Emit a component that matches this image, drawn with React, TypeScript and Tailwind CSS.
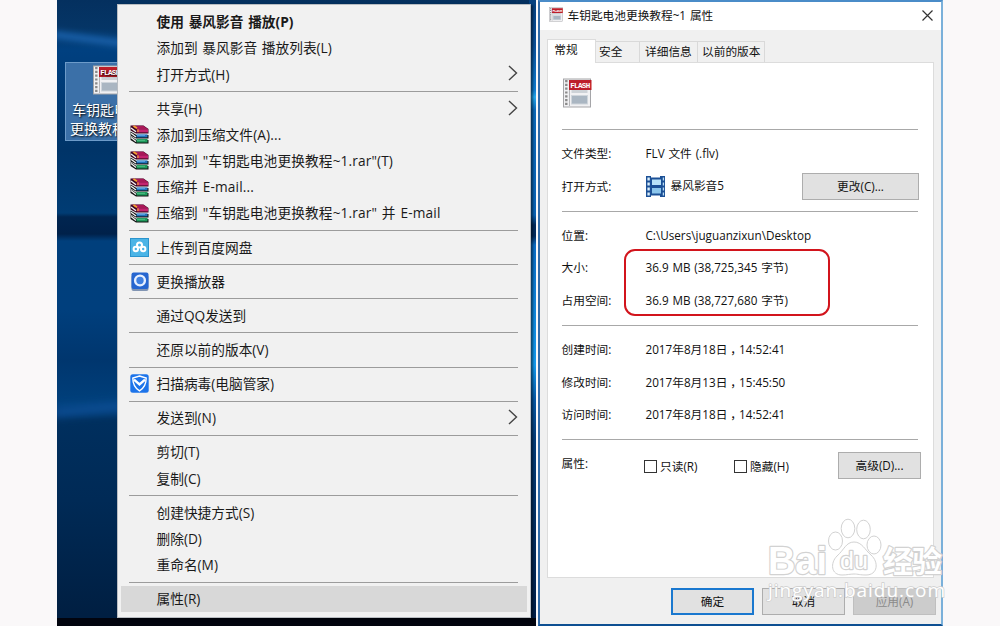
import { ReactNode } from 'react';
import clsx from 'clsx';

type MenuEntry = {
  label: string;
  icon?: 'rar' | 'pan' | 'player' | 'shield';
  submenu?: boolean;
  bold?: boolean;
  selected?: boolean;
};

const menuGroups: MenuEntry[][] = [
  [
    { label: '使用 暴风影音 播放(P)', bold: true },
    { label: '添加到 暴风影音 播放列表(L)' },
    { label: '打开方式(H)', submenu: true },
  ],
  [
    { label: '共享(H)', submenu: true },
    { label: '添加到压缩文件(A)...', icon: 'rar' },
    { label: '添加到 "车钥匙电池更换教程~1.rar"(T)', icon: 'rar' },
    { label: '压缩并 E-mail...', icon: 'rar' },
    { label: '压缩到 "车钥匙电池更换教程~1.rar" 并 E-mail', icon: 'rar' },
  ],
  [{ label: '上传到百度网盘', icon: 'pan' }],
  [{ label: '更换播放器', icon: 'player' }],
  [{ label: '通过QQ发送到' }],
  [{ label: '还原以前的版本(V)' }],
  [{ label: '扫描病毒(电脑管家)', icon: 'shield' }],
  [{ label: '发送到(N)', submenu: true }],
  [{ label: '剪切(T)' }, { label: '复制(C)' }],
  [{ label: '创建快捷方式(S)' }, { label: '删除(D)' }, { label: '重命名(M)' }],
  [{ label: '属性(R)', selected: true }],
];

const RarIcon = () => (
  <svg viewBox="0 0 19 19" className="w-[19px] h-[19px]">
    {/* bottom book first so that each one overlaps the one below */}
    <path d="M0.5 11L6.5 15H18.5V18.5H6L0.5 15Z" fill="#111" />
    <path d="M1 12.5L6 16.5" stroke="#f4f4f4" strokeWidth="1.3" />
    <path d="M6.5 14H17.5V17.5H6.5Z" fill="#1f9a5c" />
    <path d="M7 15.3H15" stroke="#5cc890" strokeWidth="0.8" />
    <path d="M0.5 6.5L6.5 10H18.5V13.5H6L0.5 10.5Z" fill="#111" />
    <path d="M1 8.3L6 12" stroke="#f4f4f4" strokeWidth="1.3" />
    <path d="M6.5 9.4H17.5V12.4H6.5Z" fill="#2273bd" />
    <path d="M7 10.4H15" stroke="#6fb2e8" strokeWidth="0.8" />
    <path d="M0.5 0.5H13.5L18.5 4V8.5H6L0.5 5.5Z" fill="#3a0620" />
    <path d="M1.5 0.8H13.3L17.8 4H6.8Z" fill="#a81858" />
    <path d="M6.8 4.2H18V7.4H6.8Z" fill="#c4246f" />
    <path d="M1 3L6 6.8" stroke="#f4f4f4" strokeWidth="1.3" />
    <path d="M3.5 1L7 3.2" stroke="#f2a22c" strokeWidth="1.8" />
    <path d="M8 4.2V7" stroke="#f2a22c" strokeWidth="1.2" />
  </svg>
);

const PanIcon = () => (
  <svg viewBox="0 0 19 19" className="w-[19px] h-[19px]">
    <rect x="0.5" y="0.5" width="18" height="18" fill="#4bb4e6" stroke="#2a94cd" />
    <g fill="none" stroke="#fff" strokeWidth="2">
      <circle cx="9.5" cy="6.9" r="2.5" />
      <circle cx="5.8" cy="11" r="2.2" />
      <circle cx="13.2" cy="11" r="2.2" />
    </g>
  </svg>
);

const PlayerIcon = () => (
  <svg viewBox="0 0 19 19" className="w-[19px] h-[19px]">
    <rect x="1.5" y="3" width="17" height="16" rx="2" fill="#8295b3" />
    <rect x="1.5" y="0.5" width="17" height="16.5" rx="2" fill="#2565d0" />
    <circle cx="10" cy="8.5" r="4.9" fill="#3f7fe0" stroke="#e6efff" strokeWidth="2.4" />
  </svg>
);

const ShieldIcon = () => (
  <svg viewBox="0 0 19 19" className="w-[19px] h-[19px]">
    <rect x="0.3" y="0.3" width="18.4" height="18.4" rx="2.5" fill="#1d74ea" />
    <path d="M9.5 2L16.2 4.1C16.2 10.5 14.2 14.2 9.5 16.9C4.8 14.2 2.8 10.5 2.8 4.1Z" fill="none" stroke="#fff" strokeWidth="1.4" />
    <path d="M4 5.6L9.5 10.4L15 5.6" fill="none" stroke="#fff" strokeWidth="2.4" />
  </svg>
);

const icons = {
  rar: <RarIcon />,
  pan: <PanIcon />,
  player: <PlayerIcon />,
  shield: <ShieldIcon />,
};

const FlashIcon = ({ className }: { className: string }) => (
  <svg viewBox="0 0 29 30" className={className}>
    <rect x="0.5" y="1" width="27" height="28" fill="#f1f1f3" stroke="#a5a5a8" />
    <rect x="6" y="2" width="1" height="26" fill="#b5b5b8" />
    <path d="M3.3 2V28" stroke="#8a8a8a" strokeWidth="2.4" strokeDasharray="2.2 1.6" />
    <rect x="8.5" y="12" width="16" height="3" fill="#cdd2d7" />
    <rect x="8.5" y="17.5" width="16" height="8.5" fill="#aab6c2" stroke="#cfd5db" />
    <rect x="6" y="2" width="22.5" height="10" fill="#bd1f2a" />
    <text x="17.2" y="9.7" fontSize="7.6" fontWeight="700" fill="#fff" textAnchor="middle" textLength="20" fontFamily="Liberation Mono, monospace">
      FLASH
    </text>
  </svg>
);

const FilmIcon = () => (
  <svg viewBox="0 0 19 21" className="w-[19px] h-[21px]">
    <path d="M0 0H5V1.5H14V0H19V21H14V19.5H5V21H0Z" fill="#1c5096" />
    <rect x="6" y="3.5" width="9" height="5.5" fill="#b9e2f8" />
    <rect x="6" y="12" width="9" height="5.5" fill="#8cc6ec" />
    <path d="M2.6 1.5V21" stroke="#d9eefb" strokeWidth="2.4" strokeDasharray="3 2" />
    <path d="M17.4 1.5V21" stroke="#b9dcf4" strokeWidth="1.3" strokeDasharray="3 2" />
  </svg>
);

const MenuItem = ({ item }: { item: MenuEntry }) => (
  <div className={clsx('flex items-center h-[26.2px] mx-[3px] px-[9px]', item.selected && 'bg-[#d8d8d8]')}>
    <div className="w-[27px] shrink-0 -ml-[0.5px]">{item.icon && icons[item.icon]}</div>
    <span className={clsx('grow whitespace-pre leading-none', item.bold && 'font-bold', item.icon === 'rar' && 'tracking-[0.12px]')}>
      {item.label}
    </span>
    {item.submenu && (
      <svg viewBox="0 0 10 16" className="w-[10px] h-[16px] -mt-[2px]">
        <path d="M1 1L8.5 8L1 15" fill="none" stroke="#444" strokeWidth="1.4" />
      </svg>
    )}
  </div>
);

const ContextMenu = () => (
  <div className="absolute left-[60px] top-[4px] w-[414px] h-[614px] pt-[4px] bg-[#f1f1f1] border border-[#b9bdc2] shadow-[2px_1px_2px_rgba(0,0,0,0.5)] text-[13.7px] [word-spacing:1.2px]">
    {menuGroups.map((group, i) => (
      <div key={i}>
        {i > 0 && (
          <div className="h-[7.95px] pt-[3.6px] ml-[11px] mr-[12px]">
            <div className="border-t border-[#9c9c9c]" />
          </div>
        )}
        {group.map((item) => (
          <MenuItem key={item.label} item={item} />
        ))}
      </div>
    ))}
  </div>
);

const Desktop = () => (
  <div className="relative w-[479px] h-full shrink-0 overflow-hidden bg-[linear-gradient(180deg,#04305f_0px,#053566_28px,#004080_50px,#003468_150px,#003c74_213px,#002550_217px,#00214a_234px,#003f7c_241px,#003f7d_310px,#00366e_360px,#00407c_405px,#002f5e_420px,#002a56_500px,#001f42_614px)]">
    {/* light beams */}
    <div className="absolute -left-[4px] top-[36px] w-[80px] h-[7px] rotate-[7deg] bg-[#1a62ac] blur-[3px]" />
    <div className="absolute -left-[4px] top-[404px] w-[80px] h-[10px] rotate-[-5deg] bg-[#0c4c92] blur-[4px]" />
    <div className="absolute right-0 top-0 w-[7px] h-full bg-[linear-gradient(180deg,#04407e_0px,#0a4f98_45px,#0f7cd0_90px,#25a9ee_97px,#0c68b8_110px,#0a62b4_215px,#032a5c_225px,#032a5c_236px,#0b6cc4_245px,#1499ec_365px,#0658a5_400px,#043c78_440px,#01204a_610px)]" />
    <div className="absolute left-[8px] top-[62px] w-[90px] h-[79px] border border-[#6d9bc9] bg-[#3b70a8] text-[14px] leading-[19px] text-white [text-shadow:1px_1px_2px_#000]">
      <FlashIcon className="w-[29px] h-[30px] ml-[27px] mt-[2px]" />
      <div className="ml-[6px] mt-[5px] w-[90px]">车钥匙电池</div>
      <div className="ml-[4px] w-[90px]">更换教程~1</div>
    </div>
    <div className="absolute bottom-0 w-full h-[8px] bg-[#01040e]" />
    <ContextMenu />
  </div>
);

const Row = ({ label, children, className }: { label: string; children?: ReactNode; className: string }) => (
  <div className={clsx('flex items-center whitespace-pre', className)}>
    <span className="w-[84px] shrink-0">{label}</span>
    {children}
  </div>
);

const Rule = () => <div className="h-px bg-[#a8a8a8]" />;

const Button = ({ children, className, look = 'bg-[#e1e1e1] border border-[#adadad]' }: { children: ReactNode; className?: string; look?: string }) => (
  <button className={clsx('h-[27px] flex items-center justify-center', look, className)}>{children}</button>
);

const Checkbox = ({ label, className }: { label: string; className: string }) => (
  <label className={clsx('flex items-center', className)}>
    <span className="w-[13px] h-[13px] border border-[#333] bg-white mr-[3px]" />
    {label}
  </label>
);

const DateText = ({ date, time }: { date: string; time: string }) => (
  <span>
    {date}
    <span className="relative left-[3px]">，</span>
    {time}
  </span>
);

const tabs = [
  { label: '安全', width: 'w-[44px] pl-[3px]' },
  { label: '详细信息', width: 'w-[58px] pl-[5px]' },
  { label: '以前的版本', width: 'w-[67px] pl-[4px]' },
];

const GeneralPanel = () => (
  <div className="w-[387px] h-[516px] ml-[7px] -mt-px pl-[13.5px] pr-[15px] pt-[15px] bg-white border border-[#dcdcdc]">
    <FlashIcon className="w-[29px] h-[30px] ml-[1.5px]" />
    <div className="h-[21px]" />
    <Rule />
    <div className="h-[81px] pt-[7px]">
      <Row label="文件类型:" className="h-[33px]">FLV 文件 (.flv)</Row>
      <Row label="打开方式:" className="h-[33px] -mr-[1px]">
        <FilmIcon />
        <span className="ml-[6px] -mt-[2px] grow">暴风影音5</span>
        <Button className="w-[117px]">更改(C)...</Button>
      </Row>
    </div>
    <Rule />
    <div className="h-[113px] pt-[7px]">
      <Row label="位置:" className="h-[32.5px]">{'C:\\Users\\juguanzixun\\Desktop'}</Row>
      <Row label="大小:" className="h-[32.5px]">36.9 MB (38,725,345 字节)</Row>
      <Row label="占用空间:" className="h-[32.5px]">36.9 MB (38,727,680 字节)</Row>
    </div>
    <Rule />
    <div className="h-[113px] pt-[7.5px]">
      <Row label="创建时间:" className="h-[32.5px]"><DateText date="2017年8月18日" time="14:52:41" /></Row>
      <Row label="修改时间:" className="h-[32.5px]"><DateText date="2017年8月13日" time="15:45:50" /></Row>
      <Row label="访问时间:" className="h-[32.5px]"><DateText date="2017年8月18日" time="14:52:41" /></Row>
    </div>
    <Rule />
    <div className="flex pt-[12px] -mr-[3px]">
      <span className="w-[82.5px] pt-[3px]">属性:</span>
      <Checkbox label="只读(R)" className="w-[90px] h-[28px]" />
      <Checkbox label="隐藏(H)" className="grow h-[28px]" />
      <Button className="w-[83px]">高级(D)...</Button>
    </div>
  </div>
);

const PropertiesDialog = () => (
  <div className="relative flex flex-col w-[405px] h-[626px] shrink-0 bg-[#f0f0f0] border-2 border-l-[#2f6aa8] border-t-[#4a8cc8] border-r-[#7ab0da] border-b-[#0d4f92] text-[11.7px] leading-[17px] text-[#111] [word-spacing:0.8px]">
    <div className="h-[28px] shrink-0 flex items-center bg-white pl-[9px] pr-[8px]">
      <FlashIcon className="w-[14px] h-[15px] mr-[4.5px] -mt-[3px]" />
      <span className="grow -mt-[2px]">车钥匙电池更换教程~1 属性</span>
      <svg viewBox="0 0 11 11" className="w-[11px] h-[11px] -mt-[2px]">
        <path d="M0.5 0.5L10.5 10.5M10.5 0.5L0.5 10.5" stroke="#333" strokeWidth="1.2" />
      </svg>
    </div>
    <div className="h-[33px] shrink-0 flex items-end pl-[7px]">
      <div className="relative w-[49px] h-[24px] flex justify-center pr-[11px] pt-[1px] bg-white border border-b-0 border-[#dcdcdc] z-10">常规</div>
      {tabs.map((tab) => (
        <div key={tab.label} className={clsx('h-[22px] flex items-center whitespace-nowrap border-t border-r border-[#d9d9d9]', tab.width)}>
          <span className="-mt-[3px]">{tab.label}</span>
        </div>
      ))}
    </div>
    <GeneralPanel />
    <div className="flex gap-[8px] mt-[10px] pl-[131px]">
      <Button className="w-[83px]" look="bg-[#e1e1e1] border-2 border-[#1a78cf]">确定</Button>
      <Button className="w-[83px]">取消</Button>
      <Button className="w-[83px]" look="bg-[#cccccc] border border-[#bfbfbf] text-[#8a8a8a]">应用(A)</Button>
    </div>
    {/* highlight around the two size rows */}
    <div className="absolute left-[84px] top-[247px] w-[206px] h-[67px] rounded-[11px] border-2 border-[#d2141c]" />
  </div>
);

const Watermark = () => (
  <svg viewBox="0 0 190 90" className="absolute left-[764px] top-[514px] w-[190px] h-[90px]" fontFamily="Open Sans, Noto Sans CJK SC, sans-serif">
    <g fill="#fff" stroke="#d2d2d2" strokeWidth="2.4" paintOrder="stroke" strokeLinejoin="round">
      <text x="4" y="60" fontSize="39" fontWeight="700" fontFamily="Liberation Sans, sans-serif" textLength="59" lengthAdjust="spacingAndGlyphs">Bai</text>
      <g strokeWidth="1" paintOrder="normal">
        <ellipse cx="71.5" cy="27" rx="7" ry="9" />
        <ellipse cx="84" cy="14.5" rx="6.8" ry="9.3" />
        <ellipse cx="99.5" cy="15.5" rx="6.8" ry="9.3" />
        <ellipse cx="110" cy="31" rx="7" ry="9" />
        <path d="M90 28C98 28 101 36 107 41C115 48 114 61 102 61C96 61 94 60 90 60C86 60 83 61 78 61C67 61 66 49 73 42C80 36 82 28 90 28Z" />
      </g>
      <text x="76" y="55" fontSize="23" textLength="28" lengthAdjust="spacingAndGlyphs" fontFamily="Liberation Sans, sans-serif">du</text>
      <text x="119" y="58" fontSize="30" fontWeight="700" textLength="59">经验</text>
    </g>
    <text x="4" y="83" fontSize="19" fill="#fff" stroke="#cdcdcd" strokeWidth="1.4" paintOrder="stroke" textLength="177">jingyan.baidu.com</text>
  </svg>
);

export default function App() {
  return (
    <div className="relative w-[1000px] h-[626px] overflow-hidden flex pl-[57px] gap-[2px] bg-[#faf8f9] text-[#1a1a1a] font-['Open_Sans','Noto_Sans_CJK_SC',sans-serif]">
      <Desktop />
      <PropertiesDialog />
      <Watermark />
    </div>
  );
}
